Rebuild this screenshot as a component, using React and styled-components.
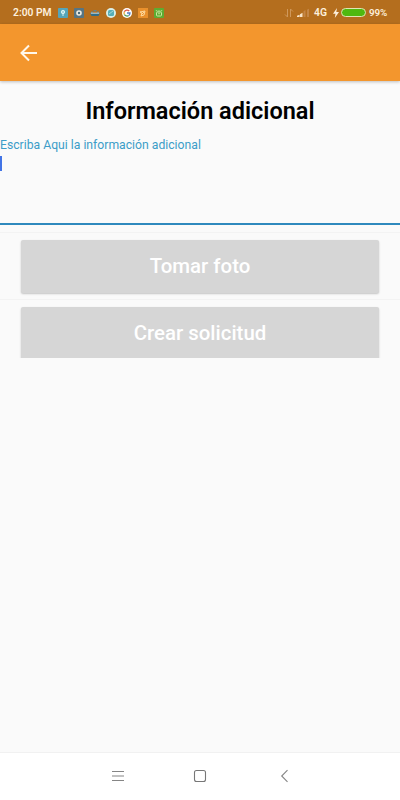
import React from "react";
import styled, { createGlobalStyle } from "styled-components";

const GlobalStyle = createGlobalStyle`
  * { box-sizing: border-box; }
  body { margin: 0; background: #fafafa; font-family: Roboto, sans-serif; }
  button { font-family: inherit; }
`;

const Screen = styled.div`
  display: flex;
  flex-direction: column;
  width: 400px;
  height: 800px;
  overflow: hidden;
  background: #fafafa;
`;

const StatusBar = styled.div`
  display: flex;
  align-items: center;
  flex: none;
  height: 24px;
  padding: 1px 13px 0;
  background: #b46e1e;
  color: #fdf0dc;
  font-size: 10.3px;
  font-weight: 600;
  line-height: 12px;
  white-space: nowrap;
`;

const Clock = styled.span`
  width: 39px;
  margin-right: 6px;
`;

const Notifications = styled.div`
  display: flex;
  gap: 6px;
  svg { display: block; width: 10px; height: 10px; }
`;

const Signals = styled.div`
  display: flex;
  align-items: center;
  margin-left: auto;
  svg { display: block; flex: none; }
`;

const SignalBars = styled.svg`
  margin-left: 3px;
`;

const Network = styled.span`
  width: 13px;
  margin: 0 6px 0 4px;
`;

const Battery = styled.span`
  width: 25px;
  height: 9px;
  margin: 0 3px 0 2px;
  border: 1px solid #dfe6b4;
  border-radius: 5px;
  background: #4fb910;
`;

const Percent = styled.span`
  width: 18px;
  font-size: 9.8px;
  letter-spacing: -0.1px;
`;

const AppBar = styled.header`
  display: flex;
  align-items: center;
  flex: none;
  height: 57px;
  padding: 0 0 0 19px;
  background: #f3962d;
  box-shadow: 0 1px 3px rgba(0, 0, 0, 0.24);
`;

const BackButton = styled.button`
  display: flex;
  padding: 1px 0 0;
  border: 0;
  background: none;
`;

const Content = styled.main`
  flex: 1;
  min-height: 0;
`;

const Title = styled.h1`
  margin: 0;
  padding-top: 16px;
  height: 56px;
  color: #000;
  font-size: 23.5px;
  font-weight: 600;
  line-height: 28px;
  letter-spacing: 0;
  text-align: center;
`;

const Field = styled.div`
  height: 88px;
  border-bottom: 2px solid #2f89bd;
`;

const Label = styled.label`
  display: block;
  height: 19px;
  color: #3c9dc8;
  font-size: 12.2px;
  line-height: 17px;
  white-space: nowrap;
`;

const Caret = styled.div`
  width: 2px;
  height: 15px;
  background: #4274e6;
`;

const Row = styled.div`
  height: ${(p) => p.$height}px;
  padding: 7px 21px 0;
  margin-top: ${(p) => p.$gap || 0}px;
  border-top: 1px solid #f3f3f3;
  overflow: hidden;
`;

const ActionButton = styled.button`
  display: block;
  width: 358px;
  height: 53px;
  padding: 0 0 1px;
  border: 0;
  border-radius: 2px;
  background: #d6d6d6;
  color: #fff;
  box-shadow: 0 1px 2px rgba(0, 0, 0, 0.22);
  font-size: 20.4px;
  font-weight: 500;
  line-height: 52px;
`;

const NavBar = styled.nav`
  display: flex;
  align-items: center;
  justify-content: space-between;
  flex: none;
  height: 48px;
  padding: 0 107px 2px 109px;
  border-top: 1px solid #f1f1f1;
  background: #fff;
  svg { display: block; }
`;

const HomeIcon = styled.svg`
  margin-right: 4px;
`;

const icon = { viewBox: "0 0 10 10" };

export default function App() {
  return (
    <>
      <GlobalStyle />
      <Screen>
        <StatusBar>
          <Clock>2:00 PM</Clock>
          <Notifications>
            <svg {...icon}>
              <rect width="10" height="10" rx="1" fill="#55a5b9" />
              <circle cx="5" cy="4" r="1.7" fill="#a9d7dd" stroke="#d9f2f1" />
              <path d="M5 5v3" stroke="#d9f2f1" />
            </svg>
            <svg {...icon}>
              <rect width="10" height="10" rx="1" fill="#577583" />
              <circle cx="5" cy="5" r="2" fill="#496b7b" stroke="#f0eee4" strokeWidth="1.6" />
            </svg>
            <svg {...icon}>
              <path d="M0 5h10L8.5 8h-7z" fill="#326d86" />
              <path d="M1 4.3h2m4 0h2M3.5 2.8h3" stroke="#65818a" strokeWidth="1.4" />
              <path d="M.8 5.2h8.4" stroke="#d9e8e8" strokeWidth=".9" />
            </svg>
            <svg {...icon}>
              <circle cx="5" cy="5" r="5" fill="#d9efe8" />
              <rect x="2" y="2" width="6" height="6" rx="1.5" fill="#55aeb8" />
              <path d="M3 6l4-3" stroke="#a6d9d6" />
            </svg>
            <svg {...icon}>
              <circle cx="5" cy="5" r="5" fill="#fff" />
              <path d="M7.2 3A3 3 0 0 0 2.3 3.8" fill="none" stroke="#dd5749" strokeWidth="1.3" />
              <path d="M2.3 3.8A3 3 0 0 0 2.5 6.7" fill="none" stroke="#e7ad35" strokeWidth="1.3" />
              <path d="M2.5 6.7A3 3 0 0 0 6.7 7.5" fill="none" stroke="#4f9f61" strokeWidth="1.3" />
              <path d="M5 5h3Q8 6.7 6.7 7.5" fill="none" stroke="#527dc1" strokeWidth="1.3" />
            </svg>
            <svg {...icon}>
              <rect width="10" height="10" fill="#e9902c" />
              <path d="M2 4l5-1-1 4-3 1 1-3zM4 6l2-2" fill="none" stroke="#ffe0a9" strokeWidth=".9" />
            </svg>
            <svg {...icon}>
              <rect width="10" height="10" rx="1" fill="#5dac32" />
              <rect x="2.5" y="4" width="5" height="4" rx="1" fill="none" stroke="#c9e8a0" />
              <path d="M3 3.5l-1-1.5m5 1.5L8 2M3.5 3h3M4 5.7h2" stroke="#c9e8a0" strokeWidth=".8" />
            </svg>
          </Notifications>
          <Signals>
            <svg width="10" height="10" viewBox="0 0 10 10" fill="none" stroke="#cf985b" strokeWidth="1">
              <path d="M1 6.5L3.5 9V1M6.5 9V1L9 3.5" />
            </svg>
            <SignalBars width="13" height="10" viewBox="0 0 13 10">
              <path d="M0 9V7.8L2.6 6.8V9zM3 9V6.3l2.5-1.6V9z" fill="#f9e5c9" />
              <path d="M6.5 9V3.3L8.5 2v7zM10 9V1.7l2-1V9z" fill="#c48646" />
            </SignalBars>
            <Network>4G</Network>
            <svg width="6" height="10" viewBox="0 0 6 10">
              <path d="M4 0L0 5.7h2.5L1.8 10 6 4H3.3z" fill="#fdf0dc" />
            </svg>
            <Battery />
            <Percent>99%</Percent>
          </Signals>
        </StatusBar>
        <AppBar>
          <BackButton aria-label="Atrás">
            <svg width="19" height="18" viewBox="0 0 19 18" fill="none" stroke="#fff8eb" strokeWidth="2">
              <path d="M18 9H3M10 1.5L2.5 9l7.5 7.5" />
            </svg>
          </BackButton>
        </AppBar>
        <Content>
          <Title>Información adicional</Title>
          <Field>
            <Label>Escriba Aqui la información adicional</Label>
            <Caret />
          </Field>
          <Row $height={67} $gap={7}>
            <ActionButton>Tomar foto</ActionButton>
          </Row>
          <Row $height={59}>
            <ActionButton>Crear solicitud</ActionButton>
          </Row>
        </Content>
        <NavBar>
          <svg width="18" height="16" viewBox="0 0 18 16" stroke="#858585" strokeWidth="1">
            <path d="M3 3.5h12M3 8h12M3 12.5h12" />
          </svg>
          <HomeIcon width="16" height="16" viewBox="0 0 16 16" fill="none" stroke="#777" strokeWidth="1.1">
            <rect x="2.5" y="2.5" width="11" height="11" rx="2" />
          </HomeIcon>
          <svg width="16" height="16" viewBox="0 0 16 16" fill="none" stroke="#858585" strokeWidth="1.1">
            <path d="M10.5 2.2L4.7 8l5.8 5.8" />
          </svg>
        </NavBar>
      </Screen>
    </>
  );
}
